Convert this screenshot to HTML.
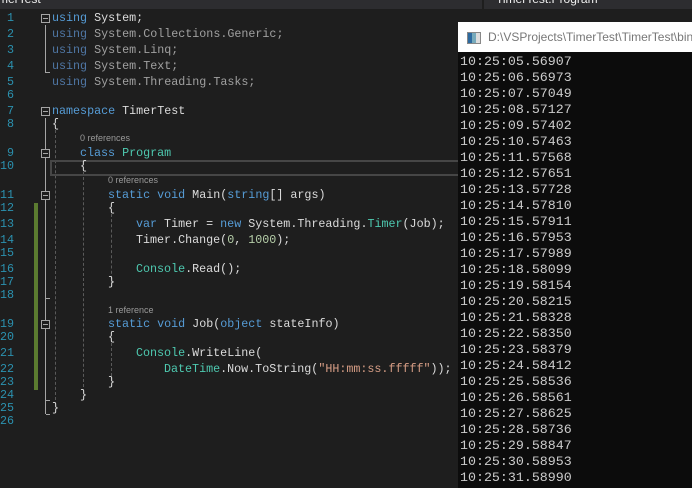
<!DOCTYPE html>
<html><head><meta charset="utf-8"><style>
body{margin:0;width:692px;height:488px;overflow:hidden;background:#1e1e1e;position:relative;font-family:"Liberation Mono",monospace}
.top{position:absolute;left:0;top:0;width:692px;height:9px;background:#2d2d30;overflow:hidden}
.top span{position:absolute;color:#f1f1f1;font:12px "Liberation Sans",sans-serif;top:-8px}
.ln{position:absolute;left:0;width:14px;text-align:right;color:#2b91af;font-size:11.7px;line-height:14px}
.c{position:absolute;color:#dcdcdc;font-size:11.7px;line-height:14px;white-space:pre}
.r{position:absolute;color:#999;font:9px "Liberation Sans",sans-serif;line-height:10px}
.k{color:#569cd6}.t{color:#4ec9b0}.s{color:#d69d85}.n{color:#b5cea8}.d{color:#4f76a4}.dd{color:#a0a0a0}
.box{position:absolute;left:41px;width:7px;height:7px;border:1px solid #a5a5a5;background:#1e1e1e}
.box:after{content:"";position:absolute;left:1px;top:3px;width:5px;height:1px;background:#a5a5a5}
.v{position:absolute;width:1px;background:#a5a5a5}
.g{position:absolute;border-left:1px dashed #5a5a5a;width:0}
.h{position:absolute;height:1px;background:#a5a5a5;width:4px}
.con{position:absolute;left:458px;top:22px;width:234px;height:466px;background:#0c0c0c}
.tb{height:30px;background:#fff;position:relative}
.tb span{position:absolute;left:30px;top:8px;font:12px "Liberation Sans",sans-serif;color:#777;white-space:nowrap}
.ico{position:absolute;left:9px;top:10px;width:12px;height:10px;border:1px solid #888;background:linear-gradient(90deg,#2d6a9f 0 4px,#7ab 4px 8px,#ddd 8px)}
.out{position:absolute;left:2px;top:32px;color:#cccccc;font-size:13.3px;line-height:16px;white-space:pre}
</style></head><body>
<div class="top"><span style="left:-2px">merTest</span><div style="position:absolute;left:482px;top:0;width:2px;height:9px;background:#1e1e1e"></div><span style="left:496px">TimerTest.Program</span></div>

<div class="v" style="left:45px;top:25px;height:42px"></div><div class="h" style="left:46px;top:72px"></div>
<div class="v" style="left:45px;top:67px;height:6px"></div>
<div class="v" style="left:45px;top:118px;height:296px"></div><div class="h" style="left:46px;top:414px"></div>
<div class="g" style="left:55px;top:130px;height:270px"></div>
<div class="g" style="left:83px;top:172px;height:215px"></div>
<div class="g" style="left:111px;top:214px;height:70px"></div>
<div class="g" style="left:111px;top:343px;height:38px"></div>
<div class="h" style="left:46px;top:298px"></div><div class="h" style="left:46px;top:400px"></div>
<div style="position:absolute;left:34px;top:203px;width:4px;height:187px;background:#5b7b30"></div>
<div style="position:absolute;left:50px;top:160px;width:410px;height:12px;border:2px solid #464646"></div>

<div class="box" style="top:14px"></div>
<div class="box" style="top:107px"></div>
<div class="box" style="top:149px"></div>
<div class="box" style="top:191px"></div>
<div class="box" style="top:320px"></div>

<div class="ln" style="top:11px">1</div><div class="c" style="left:52px;top:11px"><span class="k">using</span> System;</div>
<div class="ln" style="top:27px">2</div><div class="c" style="left:52px;top:27px"><span class="d">using</span> <span class="dd">System.Collections.Generic;</span></div>
<div class="ln" style="top:43px">3</div><div class="c" style="left:52px;top:43px"><span class="d">using</span> <span class="dd">System.Linq;</span></div>
<div class="ln" style="top:59px">4</div><div class="c" style="left:52px;top:59px"><span class="d">using</span> <span class="dd">System.Text;</span></div>
<div class="ln" style="top:75px">5</div><div class="c" style="left:52px;top:75px"><span class="d">using</span> <span class="dd">System.Threading.Tasks;</span></div>
<div class="ln" style="top:88px">6</div>
<div class="ln" style="top:104px">7</div><div class="c" style="left:52px;top:104px"><span class="k">namespace</span> TimerTest</div>
<div class="ln" style="top:117px">8</div><div class="c" style="left:52px;top:117px">{</div>
<div class="r" style="left:80px;top:133px">0 references</div>
<div class="ln" style="top:146px">9</div><div class="c" style="left:80px;top:146px"><span class="k">class</span> <span class="t">Program</span></div>
<div class="ln" style="top:159px">10</div><div class="c" style="left:80px;top:159px">{</div>
<div class="r" style="left:108px;top:175px">0 references</div>
<div class="ln" style="top:188px">11</div><div class="c" style="left:108px;top:188px"><span class="k">static</span> <span class="k">void</span> Main(<span class="k">string</span>[] args)</div>
<div class="ln" style="top:201px">12</div><div class="c" style="left:108px;top:201px">{</div>
<div class="ln" style="top:217px">13</div><div class="c" style="left:136px;top:217px"><span class="k">var</span> Timer = <span class="k">new</span> System.Threading.<span class="t">Timer</span>(Job);</div>
<div class="ln" style="top:233px">14</div><div class="c" style="left:136px;top:233px">Timer.Change(<span class="n">0</span>, <span class="n">1000</span>);</div>
<div class="ln" style="top:246px">15</div>
<div class="ln" style="top:262px">16</div><div class="c" style="left:136px;top:262px"><span class="t">Console</span>.Read();</div>
<div class="ln" style="top:275px">17</div><div class="c" style="left:108px;top:275px">}</div>
<div class="ln" style="top:288px">18</div>
<div class="r" style="left:108px;top:305px">1 reference</div>
<div class="ln" style="top:317px">19</div><div class="c" style="left:108px;top:317px"><span class="k">static</span> <span class="k">void</span> Job(<span class="k">object</span> stateInfo)</div>
<div class="ln" style="top:330px">20</div><div class="c" style="left:108px;top:330px">{</div>
<div class="ln" style="top:346px">21</div><div class="c" style="left:136px;top:346px"><span class="t">Console</span>.WriteLine(</div>
<div class="ln" style="top:362px">22</div><div class="c" style="left:164px;top:362px"><span class="t">DateTime</span>.Now.ToString(<span class="s">"HH:mm:ss.fffff"</span>));</div>
<div class="ln" style="top:375px">23</div><div class="c" style="left:108px;top:375px">}</div>
<div class="ln" style="top:388px">24</div><div class="c" style="left:80px;top:388px">}</div>
<div class="ln" style="top:401px">25</div><div class="c" style="left:52px;top:401px">}</div>
<div class="ln" style="top:414px">26</div>

<div class="con"><div class="tb"><div class="ico"></div><span>D:\VSProjects\TimerTest\TimerTest\bin</span></div>
<div class="out">10:25:05.56907
10:25:06.56973
10:25:07.57049
10:25:08.57127
10:25:09.57402
10:25:10.57463
10:25:11.57568
10:25:12.57651
10:25:13.57728
10:25:14.57810
10:25:15.57911
10:25:16.57953
10:25:17.57989
10:25:18.58099
10:25:19.58154
10:25:20.58215
10:25:21.58328
10:25:22.58350
10:25:23.58379
10:25:24.58412
10:25:25.58536
10:25:26.58561
10:25:27.58625
10:25:28.58736
10:25:29.58847
10:25:30.58953
10:25:31.58990</div></div>
</body></html>
